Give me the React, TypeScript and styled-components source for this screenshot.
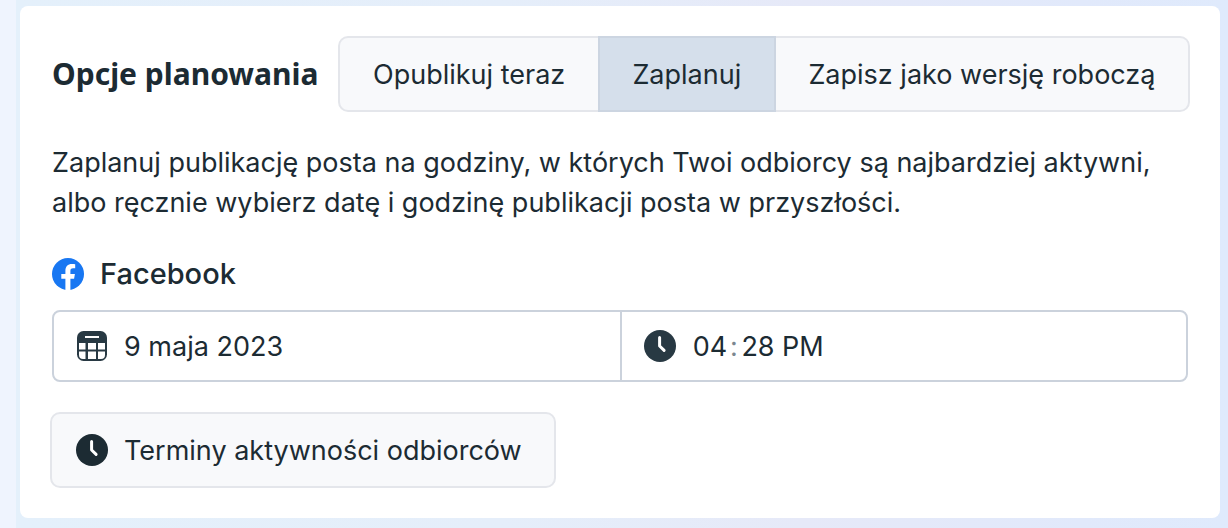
import React, { useState } from 'react';
import styled, { createGlobalStyle } from 'styled-components';

const ink = '#1c2b33';

const GlobalStyle = createGlobalStyle`
  *, *::before, *::after { box-sizing: border-box; }
  html { min-height: 100%; background: #eff4fe; }
  body { margin: 0; }
  button, input, select { font: inherit; color: inherit; }
`;

const Page = styled.main`
  min-height: 100vh;
  margin-left: 16px;
  padding: 6px 8px 10px 4px;
  background:
    linear-gradient(90deg, #e4f0fb 0%, #e5eefa 40%, #e6e9f8 65%, #e1e9fb 88%, #dfeafc 100%);
  color: ${ink};
  font-family: Inter, 'Liberation Sans', sans-serif;
  font-size: 27px;
  line-height: 40px;
`;

const Card = styled.section`
  padding: 30px;
  border-radius: 8px;
  background: #fff;
`;

const Header = styled.header`
  display: flex;
  align-items: center;
  gap: 20px;
`;

const Title = styled.h1`
  margin: 0;
  padding-left: 2px;
  font-family: 'Noto Sans', sans-serif;
  font-size: 30px;
  font-weight: 700;
  line-height: 40px;
  white-space: nowrap;
`;

const Segments = styled.div`
  display: flex;
  flex: 1;
`;

const Segment = styled.button<{ $active: boolean }>`
  flex: 1 1 auto;
  height: 76px;
  padding: 2px 32px 0;
  border: 2px solid ${p => (p.$active ? '#ccd5e1' : '#e4e6eb')};
  background: ${p => (p.$active ? '#d5dfeb' : '#f8f9fb')};
  white-space: nowrap;
  cursor: pointer;
  &:first-child { border-right: 0; border-radius: 10px 0 0 10px; }
  &:last-child { border-left: 0; border-radius: 0 10px 10px 0; }
`;

const Description = styled.p`
  margin: 31px 0 0;
  padding: 0 2px;
`;

const Network = styled.h2`
  display: flex;
  align-items: center;
  gap: 16px;
  margin: 31px 0 0;
  padding-left: 2px;
  font-size: 29px;
  font-weight: 500;
  line-height: 40px;
`;

const Fields = styled.div`
  display: grid;
  grid-template-columns: 1fr 1fr;
  margin: 16px 2px 0;
  border: 2px solid #cbd2dc;
  border-radius: 8px;
`;

const Field = styled.label`
  display: flex;
  align-items: center;
  gap: 16px;
  min-width: 0;
  height: 68px;
  padding: 0 22px;
  & + & { border-left: 2px solid #cbd2dc; }
`;

const TextInput = styled.input`
  flex: 1;
  min-width: 0;
  padding: 2px 0 0;
  border: 0;
  outline: 0;
  background: transparent;
`;

const Time = styled.span`
  display: flex;
  align-items: center;
  padding-top: 2px;
`;

const TimeInput = styled.input`
  width: 36px;
  padding: 0;
  border: 0;
  outline: 0;
  background: transparent;
  text-align: center;
`;

const Colon = styled.span`
  width: 12px;
  text-align: center;
  color: #7b8790;
`;

const Period = styled.select`
  appearance: none;
  margin-left: 6px;
  padding: 0;
  border: 0;
  outline: 0;
  background: transparent;
`;

const ActivityButton = styled.button`
  display: flex;
  align-items: center;
  gap: 16px;
  height: 76px;
  margin-top: 30px;
  padding: 0 32px 0 24px;
  border: 2px solid #e4e6eb;
  border-radius: 10px;
  background: #f8f9fb;
  cursor: pointer;
`;

const ButtonText = styled.span`
  padding-top: 2px;
`;

const Icon = styled.svg`
  flex: none;
  display: block;
`;

const ClockIcon = ({ color = ink }: { color?: string }) => (
  <Icon width="32" height="32" viewBox="0 0 32 32" aria-hidden="true">
    <circle cx="16" cy="16" r="16" fill={color} />
    <path d="M15.6 7.6v8.4l4.5 4.4" fill="none" stroke="#fff" strokeWidth="3" strokeLinecap="round" strokeLinejoin="round" />
  </Icon>
);

const CalendarIcon = () => (
  <Icon width="32" height="32" viewBox="0 0 32 32" aria-hidden="true">
    <rect x="1" y="1" width="30" height="30" rx="6.5" fill="#283943" />
    <path d="M9 7h14" stroke="#fff" strokeWidth="2" />
    <path d="M3 13h6.5v6.5H3zM12 13h8v6.5h-8zM22 13h7v6.5h-7zM12 21.5h8V29h-8zM3 21.5h6.5V29H7a4 4 0 0 1-4-4zM22 21.5h7V25a4 4 0 0 1-4 4h-3z" fill="#fff" />
  </Icon>
);

const FacebookIcon = () => (
  <Icon width="32" height="32" viewBox="0 0 32 32" aria-hidden="true">
    <circle cx="16" cy="16" r="16" fill="#1877f2" />
    <path d="M13.4 32V20.8H9.3V16h4.1v-3.1c0-4.4 2.4-6.9 6.5-6.9 1.2 0 2.3.1 3.3.3v4h-2.1c-2.1 0-2.7 1.2-2.7 2.6V16h4.5l-.8 4.8h-3.7V32z" fill="#fff" />
  </Icon>
);

const modes = ['Opublikuj teraz', 'Zaplanuj', 'Zapisz jako wersję roboczą'];

export default function App() {
  const [mode, setMode] = useState(modes[1]);
  return (
    <>
      <GlobalStyle />
      <Page>
        <Card>
          <Header>
            <Title>Opcje planowania</Title>
            <Segments role="group" aria-label="Opcje planowania">
              {modes.map(m => (
                <Segment key={m} type="button" $active={m === mode} aria-pressed={m === mode} onClick={() => setMode(m)}>
                  {m}
                </Segment>
              ))}
            </Segments>
          </Header>
          <Description>
            Zaplanuj publikację posta na godziny, w których Twoi odbiorcy są najbardziej aktywni, albo ręcznie wybierz datę i godzinę publikacji posta w przyszłości.
          </Description>
          <Network><FacebookIcon />Facebook</Network>
          <Fields>
            <Field>
              <CalendarIcon />
              <TextInput type="text" aria-label="Data" defaultValue="9 maja 2023" />
            </Field>
            <Field as="div">
              <ClockIcon color="#283943" />
              <Time>
                <TimeInput type="text" aria-label="Godzina" defaultValue="04" />
                <Colon>:</Colon>
                <TimeInput type="text" aria-label="Minuty" defaultValue="28" />
                <Period aria-label="Pora dnia" defaultValue="PM">
                  <option>AM</option>
                  <option>PM</option>
                </Period>
              </Time>
            </Field>
          </Fields>
          <ActivityButton type="button">
            <ClockIcon />
            <ButtonText>Terminy aktywności odbiorców</ButtonText>
          </ActivityButton>
        </Card>
      </Page>
    </>
  );
}
